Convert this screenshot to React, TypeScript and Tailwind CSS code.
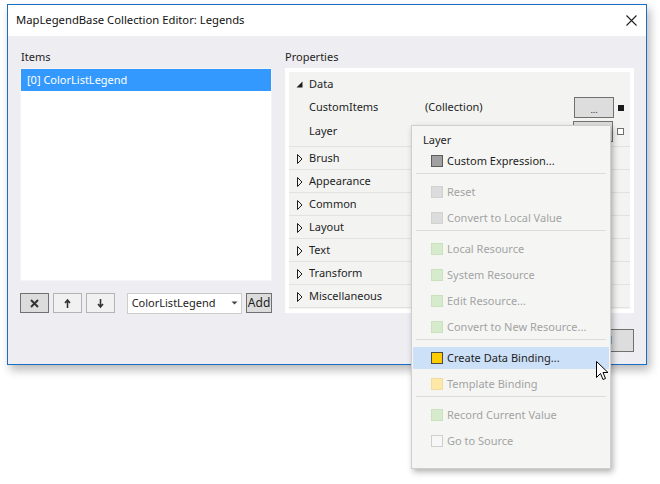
import React from "react";

const font = { fontFamily: '"Noto Sans", "Open Sans", sans-serif' };

function Tri({ open }: { open?: boolean }) {
  if (open)
    return (
      <svg width="7" height="7" viewBox="0 0 7 7" className="shrink-0">
        <polygon points="6.5,0.5 6.5,6.5 0.5,6.5" fill="#1e1e1e" />
      </svg>
    );
  return (
    <svg width="6" height="10" viewBox="0 0 6 10" className="shrink-0">
      <polygon points="0.5,0.5 5,5 0.5,9.5" fill="none" stroke="#1e1e1e" strokeWidth="1" />
    </svg>
  );
}

function Category({ name }: { name: string }) {
  return (
    <div className="h-[23px] border-b border-[#e2e3e1] flex items-center pl-[8px] pt-[1px] gap-[6px] text-[11px] text-[#1e1e1e]">
      <Tri />
      <span>{name}</span>
    </div>
  );
}

type Item = { label: string; icon: string; border: string; disabled?: boolean; hot?: boolean };

const groups: Item[][] = [
  [{ label: "Custom Expression...", icon: "#a0a0a0", border: "#5c5c5c" }],
  [
    { label: "Reset", icon: "#dcdcdc", border: "#d2d2d2", disabled: true },
    { label: "Convert to Local Value", icon: "#dcdcdc", border: "#d2d2d2", disabled: true },
  ],
  [
    { label: "Local Resource", icon: "#d5ebcb", border: "#c9e1bf", disabled: true },
    { label: "System Resource", icon: "#d5ebcb", border: "#c9e1bf", disabled: true },
    { label: "Edit Resource...", icon: "#d5ebcb", border: "#c9e1bf", disabled: true },
    { label: "Convert to New Resource...", icon: "#d5ebcb", border: "#c9e1bf", disabled: true },
  ],
  [
    { label: "Create Data Binding...", icon: "#ffcc00", border: "#4a4a4a", hot: true },
    { label: "Template Binding", icon: "#fde8a8", border: "#f3dc9e", disabled: true },
  ],
  [
    { label: "Record Current Value", icon: "#d5ebcb", border: "#c9e1bf", disabled: true },
    { label: "Go to Source", icon: "#f7f7f7", border: "#cfcfcf", disabled: true },
  ],
];

function MenuItem({ it }: { it: Item }) {
  return (
    <div
      className={
        "h-[22px] mx-[1px] flex items-center pl-[18px] gap-[4px] text-[11px] " +
        (it.hot ? "bg-[#cce0f7] text-[#1e1e1e]" : it.disabled ? "text-[#a3a3a3]" : "text-[#1e1e1e]")
      }
    >
      <span
        className="w-[12px] h-[12px] border shrink-0"
        style={{ background: it.icon, borderColor: it.border }}
      />
      <span>{it.label}</span>
    </div>
  );
}

export default function App() {
  return (
    <div className="relative w-[660px] h-[484px] bg-white overflow-hidden" style={font}>
      {/* Dialog */}
      <div className="ml-[7px] pt-[4px]">
        <div className="w-[640px] h-[361px] border border-[#1a6fc4] bg-[#eeedf2] flex flex-col shadow-[3px_5px_9px_rgba(0,0,0,0.28)]">
          {/* Title bar */}
          <div className="h-[31px] bg-white flex items-center justify-between pl-[8px] pr-[9px] shrink-0">
            <span className="text-[11.25px] text-[#111]">MapLegendBase Collection Editor: Legends</span>
            <svg width="11" height="11" viewBox="0 0 11 11">
              <path d="M0.5 0.5 L10.5 10.5 M10.5 0.5 L0.5 10.5" stroke="#1e1e1e" strokeWidth="1.1" />
            </svg>
          </div>
          {/* Body */}
          <div className="flex-1 flex flex-col px-[12px] pt-[11px]">
            <div className="flex gap-[13px]">
              {/* Items column */}
              <div className="w-[252px] flex flex-col">
                <div className="h-[20px] flex items-center text-[11px] text-[#1e1e1e] pl-[1px]">Items</div>
                <div className="mt-[1px] h-[213px] bg-white border border-[#f4f4f6] p-0">
                  <div className="h-[22px] bg-[#3399ff] text-white text-[11px] flex items-center pl-[6px]">
                    [0] ColorListLegend
                  </div>
                </div>
                <div className="mt-[12px] h-[20px] flex items-center">
                  <button className="w-[29px] h-[20px] bg-[#dcdcdc] border border-[#707070] flex items-center justify-center">
                    <svg width="9" height="9" viewBox="0 0 9 9">
                      <path d="M1 1 L8 8 M8 1 L1 8" stroke="#333" strokeWidth="2" />
                    </svg>
                  </button>
                  <button className="ml-[4px] w-[29px] h-[20px] bg-[#f1f1f1] border border-[#b3b3b3] flex items-center justify-center">
                    <svg width="7" height="9" viewBox="0 0 7 9">
                      <path d="M3.5 9 V1.5 M1 4 L3.5 1 L6 4" stroke="#333" strokeWidth="1.6" fill="none" />
                    </svg>
                  </button>
                  <button className="ml-[4px] w-[29px] h-[20px] bg-[#f1f1f1] border border-[#b3b3b3] flex items-center justify-center">
                    <svg width="7" height="9" viewBox="0 0 7 9">
                      <path d="M3.5 0 V7.5 M1 5 L3.5 8 L6 5" stroke="#333" strokeWidth="1.6" fill="none" />
                    </svg>
                  </button>
                  <div className="ml-[12px] w-[116px] h-[21px] bg-white border border-[#cdcdcd] flex items-center justify-between pl-[4px] pr-[3px] text-[11px] text-[#1e1e1e]">
                    <span>ColorListLegend</span>
                    <svg width="7" height="4" viewBox="0 0 7 4">
                      <polygon points="0.5,0.5 6.5,0.5 3.5,3.5" fill="#444" />
                    </svg>
                  </div>
                  <button className="ml-[4px] w-[26px] h-[20px] bg-[#dcdcdc] border border-[#707070] flex items-center justify-center text-[12px] text-[#1e1e1e] leading-none">
                    Add
                  </button>
                </div>
              </div>
              {/* Properties column */}
              <div className="w-[349px] flex flex-col">
                <div className="h-[20px] flex items-center text-[11px] text-[#1e1e1e]">Properties</div>
                <div className="mt-[1px] h-[245px] bg-white p-[4px]">
                  <div className="h-full bg-[#f3f4f2] flex flex-col">
                    <div className="border-b border-[#e2e3e1] pb-[3px]">
                      <div className="h-[24px] flex items-center pl-[7px] gap-[6px] text-[11px] text-[#1e1e1e]">
                        <Tri open />
                        <span>Data</span>
                      </div>
                      <div className="h-[23px] flex items-center pl-[20px] pr-[6px] text-[11px] text-[#1e1e1e]">
                        <span className="w-[116px]">CustomItems</span>
                        <span className="flex-1">(Collection)</span>
                        <div className="w-[40px] h-[21px] bg-[#dddddd] border border-[#707070] flex items-end justify-center text-[9px] leading-[12px] pb-[1px]">
                          ...
                        </div>
                        <span className="ml-[4px] w-[6px] h-[6px] bg-[#1a1a1a] border border-[#1a1a1a]" />
                      </div>
                      <div className="h-[24px] flex items-center pl-[20px] pr-[6px] text-[11px] text-[#1e1e1e]">
                        <span className="w-[116px]">Layer</span>
                        <span className="flex-1"></span>
                        <div className="w-[40px] h-[21px] bg-[#dddddd] border border-[#707070]" />
                        <span className="ml-[4px] w-[7px] h-[7px] bg-white border border-[#707070]" />
                      </div>
                    </div>
                    {["Brush", "Appearance", "Common", "Layout", "Text", "Transform", "Miscellaneous"].map((c) => (
                      <Category key={c} name={c} />
                    ))}
                  </div>
                </div>
              </div>
            </div>
            {/* bottom buttons */}
            <div className="mt-[16px] flex justify-end gap-[8px] pr-[0px]">
              <button className="w-[75px] h-[23px] bg-[#dddddd] border border-[#707070] text-[11px] text-[#1e1e1e]">OK</button>
              <button className="w-[78px] h-[23px] bg-[#dddddd] border border-[#707070] text-[11px] text-[#1e1e1e]">Cancel</button>
            </div>
          </div>
        </div>
      </div>

      {/* Context menu */}
      <div className="absolute left-[411px] top-[125px] w-[200px] h-[344px] bg-[#f5f6f4] border border-[#cfd0ce] shadow-[2px_3px_6px_rgba(0,0,0,0.3)] pt-[4px] flex flex-col">
        <div className="h-[20px] flex items-center pl-[11px] text-[11px] text-[#1e1e1e]">Layer</div>
        {groups.map((g, gi) => (
          <React.Fragment key={gi}>
            {gi > 0 && <div className="mt-[1px] mb-[7px] mx-[4px] h-px bg-[#dcdddb]" />}
            <div className="flex flex-col gap-[4px]">
              {g.map((it) => (
                <MenuItem key={it.label} it={it} />
              ))}
            </div>
          </React.Fragment>
        ))}
      </div>

      {/* Cursor */}
      <svg className="absolute left-[596px] top-[361px]" width="13" height="20" viewBox="0 0 13 20">
        <path
          d="M0.5 0.5 L0.5 16.5 L4.5 12.5 L7 18.5 L9.5 17.5 L7 11.5 L12 11.5 Z"
          fill="white"
          stroke="black"
          strokeWidth="1"
          strokeLinejoin="miter"
        />
      </svg>
    </div>
  );
}
